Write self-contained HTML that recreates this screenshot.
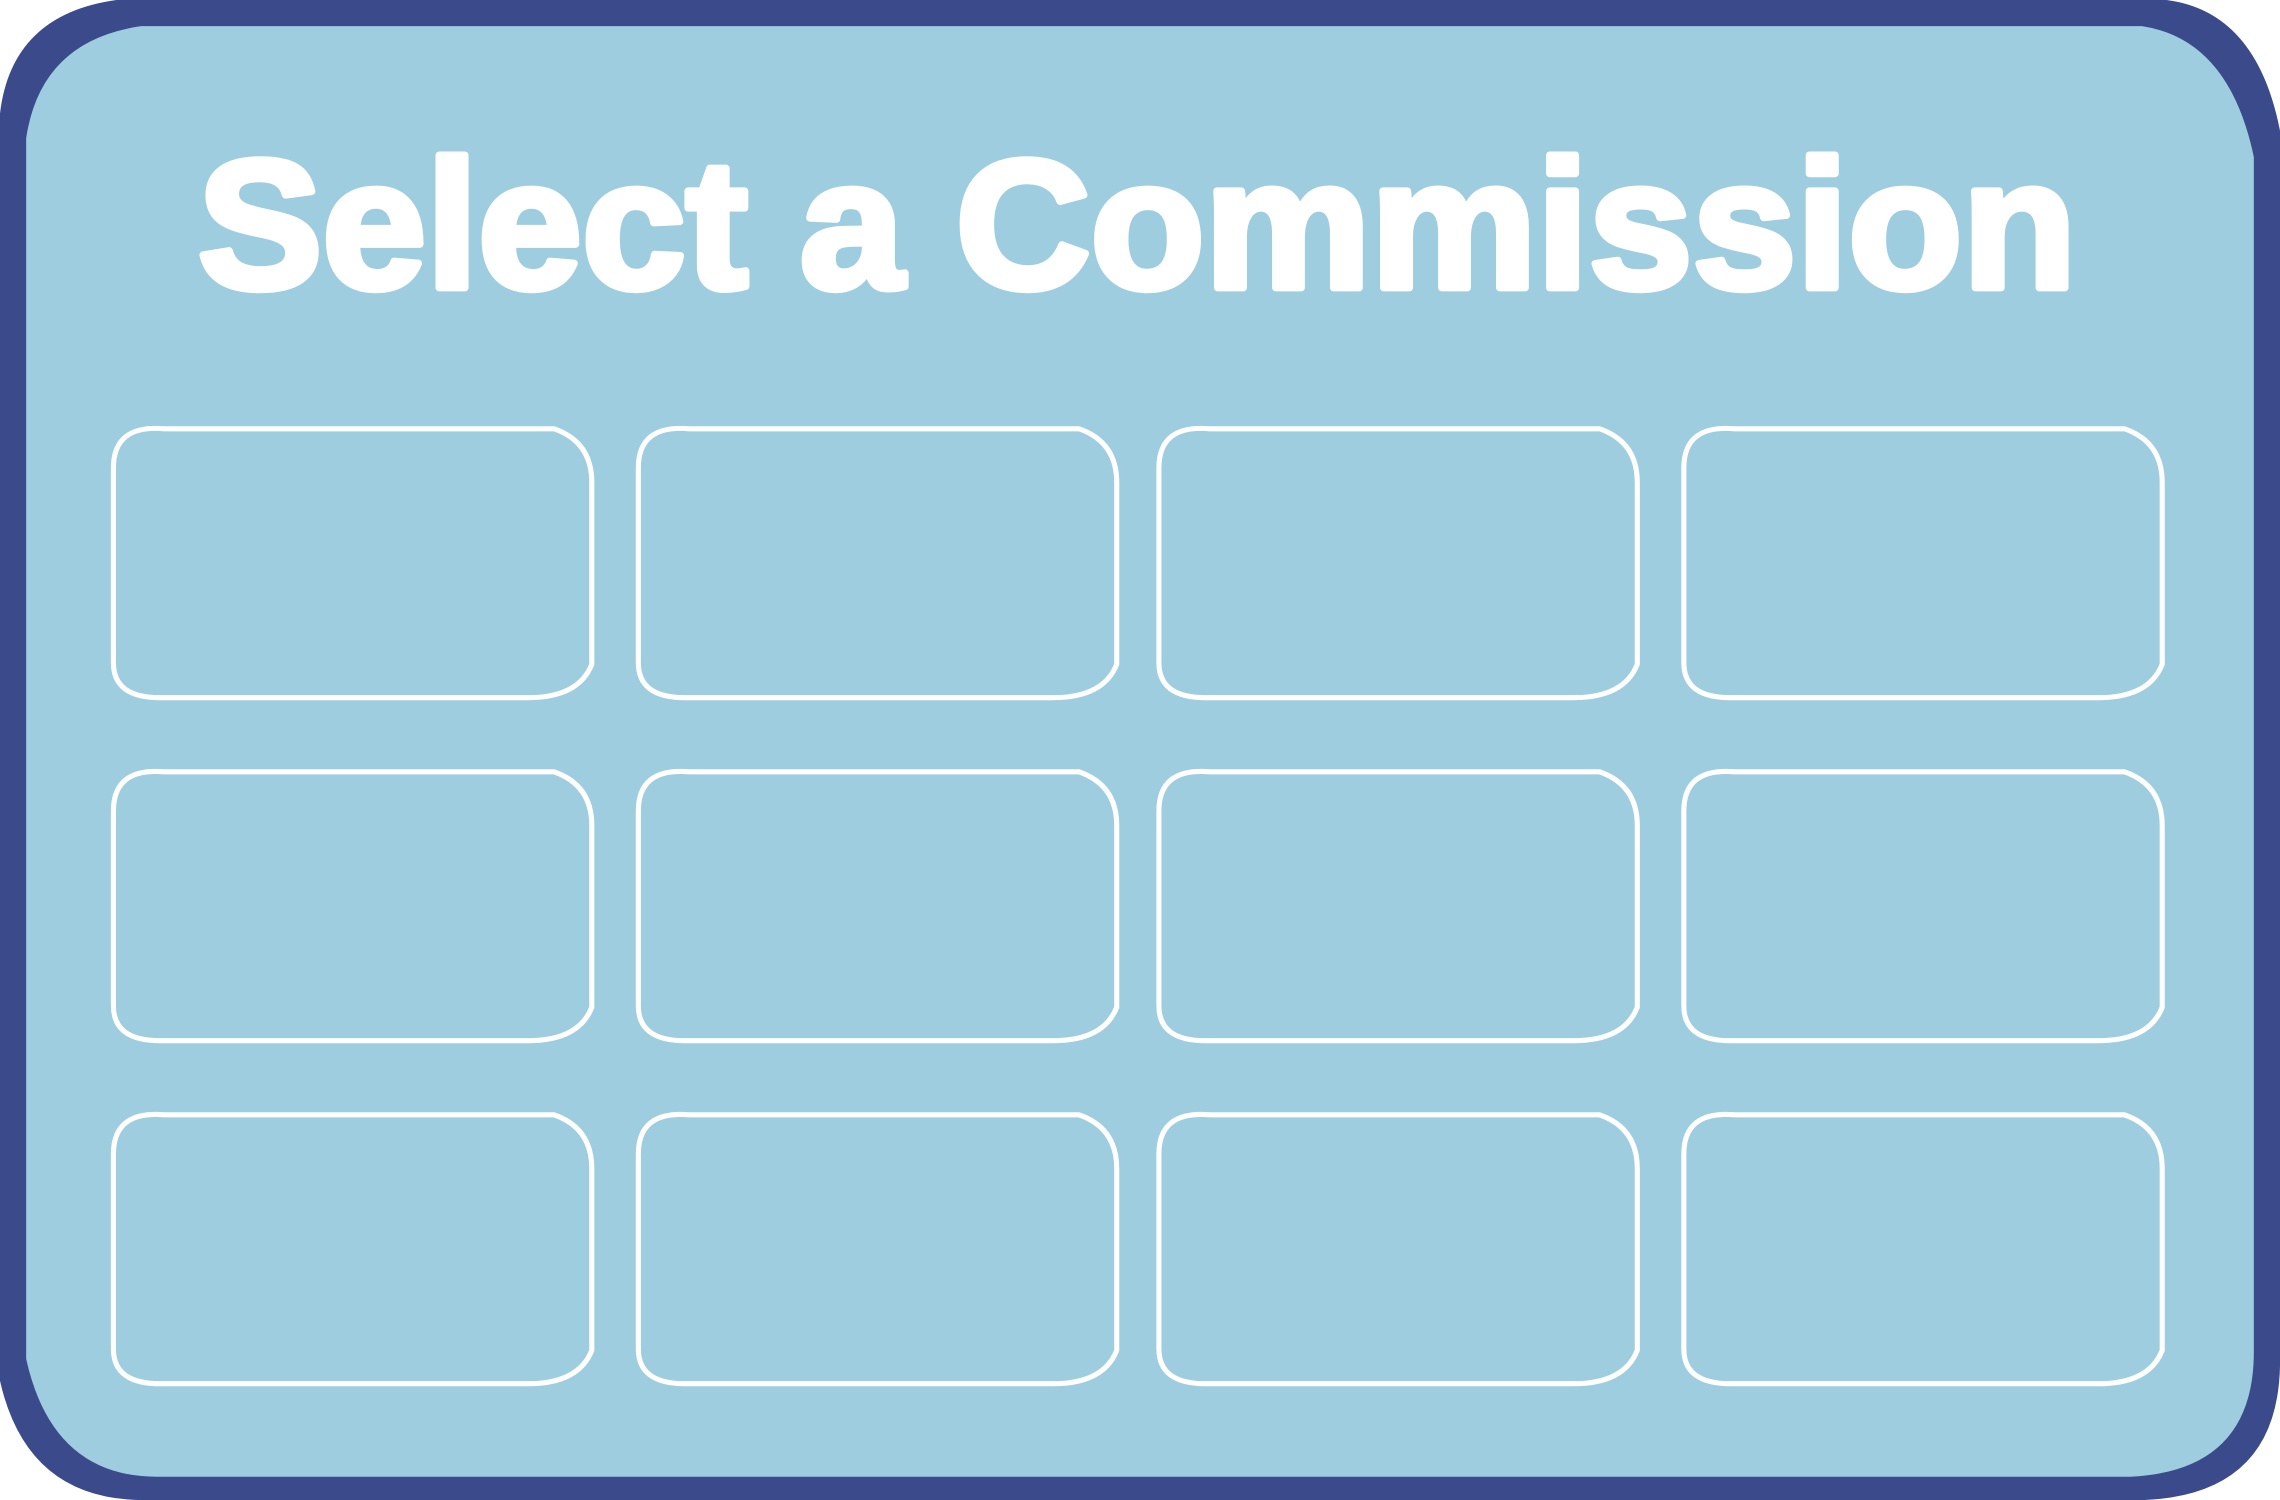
<!DOCTYPE html>
<html><head><meta charset="utf-8"><style>
html,body{margin:0;padding:0;background:#fff;width:2280px;height:1500px;overflow:hidden}
svg{display:block}
</style></head><body>
<svg width="2280" height="1500" viewBox="0 0 1568 1032" preserveAspectRatio="none" xmlns="http://www.w3.org/2000/svg">
<defs>
<path id="b" d="M0,28 Q0,-2 35,1 L303,1 Q329,10 329,38 L329,163 Q320,186 285,186 L32,186 Q0,186 0,162 Z" fill="none" stroke="#fff" stroke-width="3.5"/>
</defs>
<path d="M0,78 Q8,10 80,0 L1490,0 Q1552,8 1568,90 L1568,940 Q1566,1028 1475,1032 L95,1032 Q18,1030 0,950 Z" fill="#3b4a8b"/>
<path d="M18,95 Q28,28 97,18 L1473,18 Q1533,27 1550,108 L1550,930 Q1550,1012 1465,1016 L108,1016 Q36,1016 18,935 Z" fill="#9ecde0"/>
<text x="136" y="198" font-family="Liberation Sans, Arial, sans-serif" font-weight="900" font-size="126" fill="#fff" stroke="#fff" stroke-width="5" stroke-linejoin="round" textLength="1292" lengthAdjust="spacingAndGlyphs">Select a Commission</text>
<g>
<use href="#b" x="78" y="294"/><use href="#b" x="439" y="294"/><use href="#b" x="797" y="294"/><use href="#b" x="1158" y="294"/>
<use href="#b" x="78" y="530"/><use href="#b" x="439" y="530"/><use href="#b" x="797" y="530"/><use href="#b" x="1158" y="530"/>
<use href="#b" x="78" y="766"/><use href="#b" x="439" y="766"/><use href="#b" x="797" y="766"/><use href="#b" x="1158" y="766"/>
</g>
</svg>
</body></html>
